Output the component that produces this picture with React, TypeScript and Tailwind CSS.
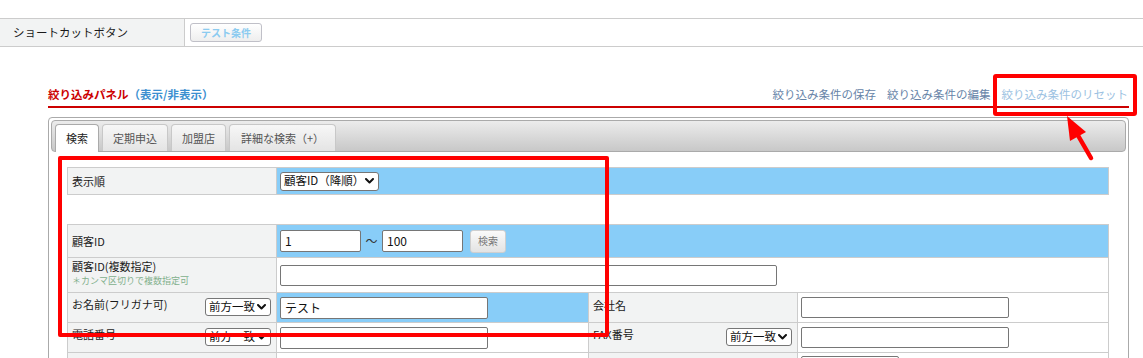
import React from "react";

function Chevron() {
  return (
    <svg width="9" height="6" viewBox="0 0 9 6" className="shrink-0">
      <path d="M1 1 L4.5 4.5 L8 1" fill="none" stroke="#111" strokeWidth="2" strokeLinecap="round" strokeLinejoin="round" />
    </svg>
  );
}

function Sel({ label, cls }: { label: string; cls: string }) {
  return (
    <div className={"flex h-[18px] items-center justify-between rounded-[3px] border border-[#767676] bg-white pl-[3px] pr-[4px] text-[11.5px] leading-none text-[#111] " + cls}>
      <span>{label}</span>
      <Chevron />
    </div>
  );
}

function Inp({ cls, value }: { cls: string; value?: string }) {
  return (
    <div className={"flex items-center rounded-[2px] border border-[#767676] bg-white pl-[4px] text-[12px] leading-none text-[#111] " + cls}>
      {value}
    </div>
  );
}

const cellBase = "border-r border-b border-[#cccccc]";

export default function App() {
  return (
    <div className="relative h-[358px] w-[1143px] overflow-hidden bg-white text-[#1a1a1a] font-['Noto_Sans_CJK_JP','Noto_Sans',sans-serif]">
      <div className="h-[18px]" />
      {/* shortcut row */}
      <div className="flex h-[29px] border-y border-[#cccccc]">
        <div className="flex w-[185px] items-center border-r border-[#cccccc] bg-[#f2f3f3] pl-[13px] text-[11.5px] text-[#1a1a1a]">
          ショートカットボタン
        </div>
        <div className="flex items-center pl-[5px]">
          <div className="flex h-[19px] w-[72px] items-center justify-center rounded-[3px] border border-[#c0c0c8] bg-gradient-to-b from-white to-[#eeeeee] text-[10px] font-bold leading-none text-[#8ccbf0]">
            テスト条件
          </div>
        </div>
      </div>

      {/* title bar */}
      <div className="ml-[48px] mt-[39px] flex w-[1081px] items-end justify-between border-b-2 border-[#cc0000] pb-[4px]">
        <div className="text-[11.5px] font-bold leading-[16px] text-[#cc0000]">
          絞り込みパネル<span className="text-[#3b8fd0]">（表示/非表示）</span>
        </div>
        <div className="flex gap-[11px] pr-[1px] text-[11.5px] leading-[16px]">
          <span className="text-[#6784a8]">絞り込み条件の保存</span>
          <span className="text-[#6784a8]">絞り込み条件の編集</span>
          <span className="text-[#9cc2e2]">絞り込み条件のリセット</span>
        </div>
      </div>

      {/* tab container */}
      <div className="ml-[48px] mt-[9px] h-[300px] w-[1081px] rounded-[4px] border border-[#aaaaaa] p-[2px]">
        <div className="flex h-[32px] items-end gap-[3px] rounded-[4px] border border-[#aaaaaa] bg-gradient-to-b from-[#ececec] to-[#c8c8c8] pl-[3px]">
          <div className="-mb-[1px] flex h-[28px] items-center rounded-t-[4px] border border-b-0 border-[#aaaaaa] bg-white px-[10px] pb-[1px] text-[11px] text-[#222]">
            検索
          </div>
          <div className="flex h-[27px] items-center rounded-t-[4px] border border-b-0 border-[#c8c8c8] bg-gradient-to-b from-[#f7f7f7] to-[#e4e4e4] px-[10px] text-[11px] text-[#555]">
            定期申込
          </div>
          <div className="flex h-[27px] items-center rounded-t-[4px] border border-b-0 border-[#c8c8c8] bg-gradient-to-b from-[#f7f7f7] to-[#e4e4e4] px-[10px] text-[11px] text-[#555]">
            加盟店
          </div>
          <div className="flex h-[27px] items-center rounded-t-[4px] border border-b-0 border-[#c8c8c8] bg-gradient-to-b from-[#f7f7f7] to-[#e4e4e4] px-[11px] text-[11px] text-[#555]">
            詳細な検索（+）
          </div>
        </div>

        {/* table A */}
        <div className="ml-[16px] mt-[15px] grid w-[1042px] grid-cols-[209px_312px_209px_311px] border-l border-t border-[#cccccc] text-[11px]">
          <div className={cellBase + " flex h-[27px] items-center bg-[#f2f3f3] pl-[4px]"}>表示順</div>
          <div className={cellBase + " col-span-3 flex h-[27px] items-center bg-[#88cdf8] pl-[3px]"}>
            <Sel label="顧客ID（降順）" cls="w-[99px] h-[19px]" />
          </div>
        </div>

        {/* table B */}
        <div className="ml-[16px] mt-[29px] grid w-[1042px] grid-cols-[209px_312px_209px_311px] border-l border-t border-[#cccccc] text-[11px]">
          {/* row 2 */}
          <div className={cellBase + " flex h-[33px] items-center bg-[#f2f3f3] pl-[4px]"}>顧客ID</div>
          <div className={cellBase + " col-span-3 flex h-[33px] items-center bg-[#88cdf8] pl-[3px]"}>
            <Inp cls="h-[22px] w-[81px]" value="1" />
            <span className="w-[21px] text-center text-[12px] text-[#333]">～</span>
            <Inp cls="h-[22px] w-[81px]" value="100" />
            <div className="ml-[7px] flex h-[23px] w-[36px] items-center justify-center rounded-[3px] border border-[#cfcfcf] bg-gradient-to-b from-[#fafafa] to-[#e3e3e3] text-[10px] leading-none text-[#777]">
              検索
            </div>
          </div>
          {/* row 3 */}
          <div className={cellBase + " flex h-[35px] flex-col bg-[#f2f3f3] pl-[4px] pt-[1px]"}>
            <span className="text-[11px] leading-[15px]">顧客ID(複数指定)</span>
            <span className="text-[9px] leading-[14px] text-[#82b08c]">＊カンマ区切りで複数指定可</span>
          </div>
          <div className={cellBase + " col-span-3 flex h-[35px] items-center bg-white pl-[3px]"}>
            <Inp cls="h-[21px] w-[497px]" />
          </div>
          {/* row 4 */}
          <div className={cellBase + " flex h-[30px] items-start justify-between bg-[#f2f3f3] pl-[4px] pt-[3px]"}>
            <span className="leading-[16px]">お名前(フリガナ可)</span>
            <Sel label="前方一致" cls="mr-[5px] mt-[2px] w-[66px]" />
          </div>
          <div className={cellBase + " flex h-[30px] items-center bg-[#88cdf8] pl-[3px]"}>
            <Inp cls="h-[22px] w-[208px] text-[11px]" value="テスト" />
          </div>
          <div className={cellBase + " flex h-[30px] items-start bg-[#f2f3f3] pl-[4px] pt-[4px]"}>
            <span className="leading-[16px]">会社名</span>
          </div>
          <div className={cellBase + " flex h-[30px] items-center bg-white pl-[3px]"}>
            <Inp cls="h-[21px] w-[208px]" />
          </div>
          {/* row 5 */}
          <div className={cellBase + " flex h-[30px] items-start justify-between bg-[#f2f3f3] pl-[4px] pt-[3px]"}>
            <span className="leading-[16px]">電話番号</span>
            <Sel label="前方一致" cls="mr-[5px] mt-[2px] w-[66px]" />
          </div>
          <div className={cellBase + " flex h-[30px] items-center bg-white pl-[3px]"}>
            <Inp cls="h-[22px] w-[208px]" />
          </div>
          <div className={cellBase + " flex h-[30px] items-start justify-between bg-[#f2f3f3] pl-[4px] pt-[3px]"}>
            <span className="leading-[16px]">FAX番号</span>
            <Sel label="前方一致" cls="mr-[5px] mt-[2px] w-[66px]" />
          </div>
          <div className={cellBase + " flex h-[30px] items-center bg-white pl-[3px]"}>
            <Inp cls="h-[21px] w-[208px]" />
          </div>
          {/* row 6 (cut off by viewport) */}
          <div className={cellBase + " h-[30px] bg-[#f2f3f3]"} />
          <div className={cellBase + " h-[30px] bg-white"} />
          <div className={cellBase + " h-[30px] bg-[#f2f3f3]"} />
          <div className={cellBase + " flex h-[30px] items-start bg-white pl-[3px] pt-[3px]"}>
            <Inp cls="h-[21px] w-[98px]" />
          </div>
        </div>
      </div>

      {/* annotations */}
      <div className="pointer-events-none absolute left-[993px] top-[74px] h-[42px] w-[144px] rounded-[3px] border-[4px] border-[#ff0000]" />
      <div className="pointer-events-none absolute left-[58px] top-[156px] h-[181px] w-[551px] rounded-[2px] border-[4px] border-[#ff0000]" />
      <svg className="pointer-events-none absolute left-[1055px] top-[108px]" width="50" height="60" viewBox="1055 108 50 60">
        <line x1="1091" y1="158" x2="1076" y2="132" stroke="#ff0000" strokeWidth="4.5" strokeLinecap="round" />
        <polygon points="1067,116 1086,132 1070,141" fill="#ff0000" />
      </svg>
    </div>
  );
}
